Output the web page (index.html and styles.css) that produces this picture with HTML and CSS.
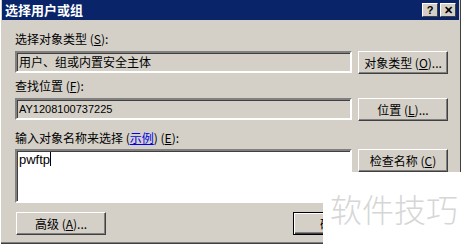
FILE: index.html
```html
<!DOCTYPE html>
<html>
<head>
<meta charset="utf-8">
<title>选择用户或组</title>
<link rel="stylesheet" href="styles.css">
</head>
<body>
<div class="window">
  <div class="titlebar">
    <span class="title">选择用户或组</span>
    <span class="tbtns"><span class="tbtn">?</span><span class="tbtn">✕</span></span>
  </div>
  <div class="content">
    <div class="label">选择对象类型 (<u>S</u>):</div>
    <div class="row">
      <div class="field">用户、组或内置安全主体</div>
      <div class="btn">对象类型 (<u>O</u>)...</div>
    </div>
    <div class="label gap1">查找位置 (<u>F</u>):</div>
    <div class="row">
      <div class="field latin">AY1208100737225</div>
      <div class="btn">位置 (<u>L</u>)...</div>
    </div>
    <div class="label gap2">输入对象名称来选择 (<a class="link">示例</a>) (<u>E</u>):</div>
    <div class="row">
      <div class="edit">pwftp<span class="caret"></span></div>
      <div class="btn">检查名称 (<u>C</u>)</div>
    </div>
    <div class="bottom">
      <div class="btn">高级 (<u>A</u>)...</div>
      <div class="btn ok">确</div>
    </div>
  </div>
  <div class="mark">软件技巧</div>
</div>
</body>
</html>
```

FILE: styles.css
```css
body{margin:0; font-family:"Noto Sans CJK SC", "Liberation Sans", sans-serif; font-size:12px; color:#000;}
.window{position:relative; width:461px; height:244px; box-sizing:border-box; padding:0 2px 3px 2px; background:#d4d0c8; box-shadow:inset 1px 0 #fff, inset -1px 0 #404040, inset 0 -1px #404040, inset 0 -2px #808080; overflow:hidden;}
.titlebar{height:20px; background:#0a246a; display:flex; align-items:center; justify-content:space-between; padding:0 3px 0 3px;}
.title{color:#fff; font-weight:bold; font-size:13px; line-height:20px;}
.tbtns{display:flex; gap:2px;}
.tbtn{width:16px; height:14px; box-sizing:border-box; background:#d4d0c8; border:1px solid; border-color:#fff #404040 #404040 #fff; font:bold 11px/12px "Liberation Sans", sans-serif; text-align:center;}
.content{padding:11px 0 0 13px;}
.label{height:16px; line-height:16px; margin-bottom:4px; white-space:nowrap;}
.gap1{margin-top:4px;}
.gap2{margin-top:9px; margin-bottom:3px;}
.link{color:#0000ee; text-decoration:underline;}
.row{display:flex; gap:6px; align-items:flex-start;}
.field{width:337px; height:22px; box-sizing:border-box; border:2px solid; border-color:#808080 #fff #fff #808080; box-shadow:inset 1px 1px #404040; background:#d4d0c8; padding-left:2px; line-height:18px; white-space:nowrap;}
.latin{font-family:"Liberation Sans", sans-serif; font-size:11px;}
.edit{width:337px; height:54px; box-sizing:border-box; border:2px solid; border-color:#808080 #fff #fff #808080; box-shadow:inset 1px 1px #404040; background:#fff; padding:1px 0 0 2px; font-family:"Liberation Sans", sans-serif; font-size:13px; line-height:16px;}
.caret{display:inline-block; width:1px; height:14px; background:#000; vertical-align:-2px;}
.btn{width:90px; height:23px; box-sizing:border-box; border:1px solid; border-color:#fff #404040 #404040 #fff; box-shadow:inset -1px -1px #808080; background:#d4d0c8; text-align:center; line-height:21px; white-space:nowrap;}
.bottom{display:flex; gap:187px; margin-top:9px; padding-left:1px;}
.ok{width:75px; border:1px solid #000; box-shadow:inset 1px 1px #fff, inset -1px -1px #404040, inset -2px -2px #808080; text-align:left; padding-left:26px;}
.mark{position:absolute; left:323px; top:172px; width:140px; height:72px; background:#fff; color:#d6d6d6; font-size:32px; font-weight:300; line-height:72px; padding-left:7px; box-sizing:border-box;}
```
